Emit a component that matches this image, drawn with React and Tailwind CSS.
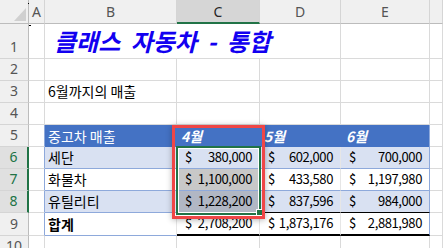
import React from "react";

const FONT = "font-['Noto_Sans_CJK_KR','Noto_Sans',sans-serif]";
const GRID = "border-r border-b border-[#dadada]";

const data = [
  { label: "세단", vals: [380000, 602000, 700000], bg: "bg-[#d9e1f2]", sel: "bg-[#d9e1f2]" },
  { label: "화물차", vals: [1100000, 433580, 1197980], bg: "bg-white", sel: "bg-[#c8c8c8]" },
  { label: "유틸리티", vals: [1228200, 837596, 984000], bg: "bg-[#d9e1f2]", sel: "bg-[#b1b7c4]" },
];
const totals = [2708200, 1873176, 2881980];

const fmt = (n) => n.toLocaleString("en-US");

// accounting style cell: "$" on the left, amount on the right
const Money = ({ v, className = "" }) => (
  <div className={`flex items-end justify-between pl-[8px] pr-[7px] pb-[2px] leading-[18px] text-[13px] tracking-[-0.4px] ${className}`}>
    <span>$</span>
    <span>{fmt(v)}</span>
  </div>
);

const ColHead = ({ children, active }) => (
  <div
    className={`flex items-center justify-center text-[14px] font-['Noto_Sans',sans-serif] border-r border-r-[#d5d5d5] ${
      active
        ? "bg-[#d6d6d6] border-b-2 border-b-[#217346] text-[#262626]"
        : "bg-[#f0f0f0] border-b border-b-[#bcbcbc] text-[#555]"
    }`}
  >
    {children}
  </div>
);

const RowHead = ({ n, active }) => (
  <div
    className={`flex items-end justify-center pb-[2px] leading-[18px] text-[14px] font-['Noto_Sans',sans-serif] border-b border-b-[#d5d5d5] ${
      active
        ? "bg-[#e0e0e0] border-r-2 border-r-[#217346] text-[#217346]"
        : "bg-[#f0f0f0] border-r border-r-[#bcbcbc] text-[#555]"
    }`}
  >
    {n}
  </div>
);

const Empty = ({ className = "" }) => <div className={`${GRID} ${className}`} />;

const TXT = "flex items-end pb-[2px] leading-[18px] text-[14px]";

export default function App() {
  return (
    <div className={`relative h-[248px] w-[443px] overflow-hidden bg-white text-black ${FONT}`}>
      <div className="grid grid-cols-[29px_16px_132px_83px_81px_89px_13px] grid-rows-[24px_35px_22px_22px_22px_22px_22px_22px_22px_23px_22px]">
        {/* column headers */}
        <div className="relative bg-[#f0f0f0] border-r border-r-[#bcbcbc] border-b border-b-[#bcbcbc]">
          <svg className="absolute left-0 top-0" width="29" height="24">
            <polygon points="26,8 26,21 14,21" fill="#d0d0d0" />
          </svg>
        </div>
        <ColHead>A</ColHead>
        <ColHead>B</ColHead>
        <ColHead active>C</ColHead>
        <ColHead>D</ColHead>
        <ColHead>E</ColHead>
        <ColHead />

        {/* row 1 - title over B:D */}
        <RowHead n={1} />
        <Empty />
        <div className={`col-span-3 flex items-center pl-[9px] ${GRID}`}>
          <span className="whitespace-nowrap text-[24px] font-bold italic text-[#1200f0] [word-spacing:5px] leading-none">
            클래스 자동차 - 통합
          </span>
        </div>
        <Empty />
        <Empty />

        {/* row 2 */}
        <RowHead n={2} />
        <Empty />
        <Empty />
        <Empty />
        <Empty />
        <Empty />
        <Empty />

        {/* row 3 */}
        <RowHead n={3} />
        <Empty />
        <div className={`${TXT} pl-[3px] ${GRID}`}>6월까지의 매출</div>
        <Empty />
        <Empty />
        <Empty />
        <Empty />

        {/* row 4 */}
        <RowHead n={4} />
        <Empty />
        <Empty />
        <Empty />
        <Empty />
        <Empty />
        <Empty />

        {/* row 5 - table header */}
        <RowHead n={5} />
        <div className="border-b border-b-[#dadada] border-r border-r-[#8ea9db]" />
        <div className={`${TXT} pl-[3px] bg-[#4472c4] text-white`}>중고차 매출</div>
        <div className={`${TXT} pl-[4px] bg-[#4472c4] text-white font-bold italic`}>4월</div>
        <div className={`${TXT} pl-[4px] bg-[#4472c4] text-white font-bold italic`}>5월</div>
        <div className={`${TXT} pl-[5px] bg-[#4472c4] text-white font-bold italic border-r border-r-[#8ea9db]`}>6월</div>
        <Empty />

        {/* rows 6-8 */}
        {data.map((r, i) => {
          const last = i === data.length - 1;
          const bottom = last ? "border-b-black" : "border-b-[#8ea9db]";
          return (
            <React.Fragment key={r.label}>
              <RowHead n={6 + i} active />
              <div className="border-b border-b-[#dadada] border-r border-r-[#8ea9db]" />
              <div className={`${TXT} pl-[3px] border-b border-b-[#8ea9db] border-r border-r-[#e6e6e6] ${r.bg}`}>
                {r.label}
              </div>
              <Money v={r.vals[0]} className={`border-b border-r border-r-[#e6e6e6] ${bottom} ${r.sel}`} />
              <Money v={r.vals[1]} className={`border-b border-r border-r-[#e6e6e6] ${bottom} ${r.bg}`} />
              <Money v={r.vals[2]} className={`border-b border-r border-r-[#8ea9db] ${bottom} ${r.bg}`} />
              <Empty />
            </React.Fragment>
          );
        })}

        {/* row 9 - total */}
        <RowHead n={9} />
        <div className="border-b border-b-[#dadada] border-r border-r-[#8ea9db]" />
        <div className={`${TXT} pl-[3px] font-bold border-b border-b-[#8ea9db] border-r border-r-[#e6e6e6]`}>합계</div>
        <Money v={totals[0]} className="border-b-2 border-b-black border-r border-r-[#e6e6e6]" />
        <Money v={totals[1]} className="border-b-2 border-b-black border-r border-r-[#e6e6e6]" />
        <Money v={totals[2]} className="border-b-2 border-b-black border-r border-r-[#8ea9db]" />
        <Empty />

        {/* row 10 */}
        <RowHead n={10} />
        <Empty />
        <Empty />
        <Empty />
        <Empty />
        <Empty />
        <Empty />
      </div>

      {/* selection C6:C8 */}
      <div className="absolute left-[176px] top-[146px] h-[69px] w-[85px] border-2 border-[#217346] shadow-[inset_0_0_0_1px_#fff]" />
      <div className="absolute left-[256px] top-[209px] h-[7px] w-[7px] border border-white bg-[#217346]" />

      {/* red highlight */}
      <div className="absolute left-[172px] top-[125px] h-[94px] w-[93px] border-[3px] border-[#ef4646] shadow-[0_1px_6px_rgba(0,0,0,0.3)]" />

      {/* stray cursor dots */}
      <div className="absolute left-[28px] top-[3px] h-[1px] w-[1px] bg-black" />
      <div className="absolute left-[29px] top-[25px] h-[1px] w-[2px] bg-black" />
    </div>
  );
}
